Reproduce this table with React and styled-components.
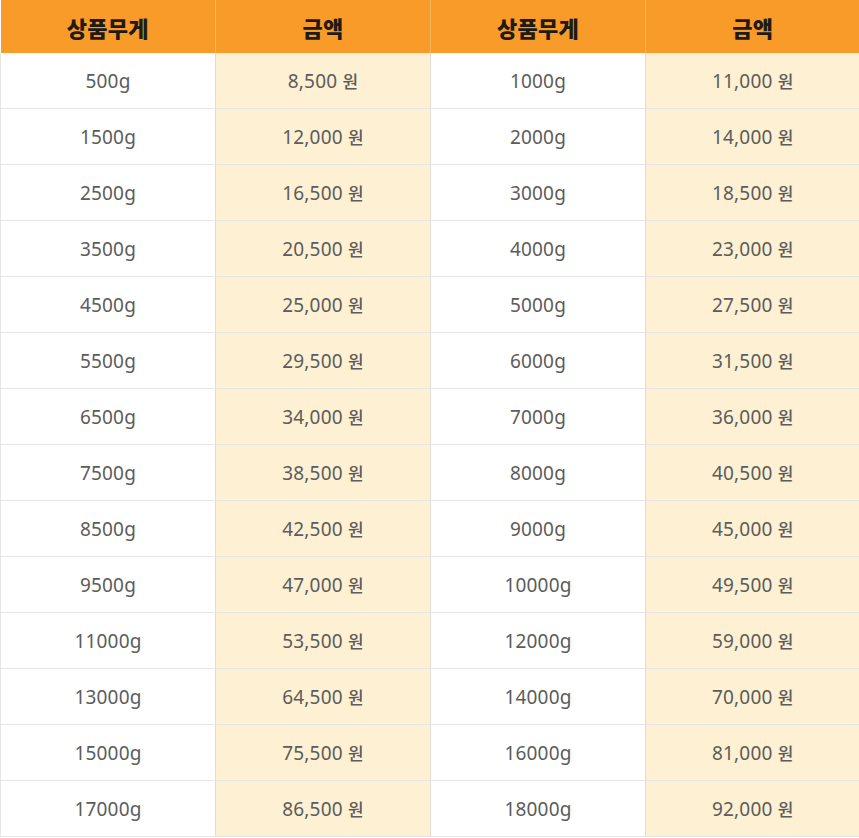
import React from "react";
import styled, { createGlobalStyle } from "styled-components";

const Global = createGlobalStyle`
  html, body { margin: 0; padding: 0; background: #ffffff; }
  body { font-family: "Noto Sans", "Noto Sans CJK KR", sans-serif; }
`;

const rows = [
  ["500g", "8,500", "1000g", "11,000"],
  ["1500g", "12,000", "2000g", "14,000"],
  ["2500g", "16,500", "3000g", "18,500"],
  ["3500g", "20,500", "4000g", "23,000"],
  ["4500g", "25,000", "5000g", "27,500"],
  ["5500g", "29,500", "6000g", "31,500"],
  ["6500g", "34,000", "7000g", "36,000"],
  ["7500g", "38,500", "8000g", "40,500"],
  ["8500g", "42,500", "9000g", "45,000"],
  ["9500g", "47,000", "10000g", "49,500"],
  ["11000g", "53,500", "12000g", "59,000"],
  ["13000g", "64,500", "14000g", "70,000"],
  ["15000g", "75,500", "16000g", "81,000"],
  ["17000g", "86,500", "18000g", "92,000"],
];

const Table = styled.table`
  width: 859px;
  border-collapse: collapse;
  table-layout: fixed;
  font-family: "Noto Sans", "Noto Sans CJK KR", sans-serif;
`;

const HeadCell = styled.th`
  height: 53px;
  padding: 0;
  background: #f99b29;
  color: #1e1a16;
  font-family: "Noto Sans CJK KR", sans-serif;
  font-size: 22px;
  font-weight: 900;
  letter-spacing: 0.3px;
  text-align: center;
  border-right: 1px solid #f7b45e;
  &:last-child { border-right: none; }
`;

const Cell = styled.td`
  height: 55px;
  padding: 0;
  text-align: center;
  font-size: 19px;
  font-weight: 400;
  letter-spacing: 0.2px;
  color: #5c5c5c;
  background: ${(p) => (p.$price ? "#fdf0d3" : "#ffffff")};
  border-right: 1px solid #e2ddd3;
  border-bottom: 1px solid #e6e6e6;
  &:first-child { border-left: 1px solid #e6e6e6; }
  &:last-child { border-right: none; }
`;

const Won = styled.span`
  font-family: "Noto Sans CJK KR", sans-serif;
  font-size: 17px;
  font-weight: 500;
`;

export default function App() {
  return (
    <>
      <Global />
      <Table>
        <colgroup>
          <col style={{ width: 215 }} />
          <col style={{ width: 215 }} />
          <col style={{ width: 215 }} />
          <col style={{ width: 214 }} />
        </colgroup>
        <thead>
          <tr>
            <HeadCell>상품무게</HeadCell>
            <HeadCell>금액</HeadCell>
            <HeadCell>상품무게</HeadCell>
            <HeadCell>금액</HeadCell>
          </tr>
        </thead>
        <tbody>
          {rows.map((r, i) => (
            <tr key={i}>
              <Cell>{r[0]}</Cell>
              <Cell $price>{r[1]} <Won>원</Won></Cell>
              <Cell>{r[2]}</Cell>
              <Cell $price>{r[3]} <Won>원</Won></Cell>
            </tr>
          ))}
        </tbody>
      </Table>
    </>
  );
}
